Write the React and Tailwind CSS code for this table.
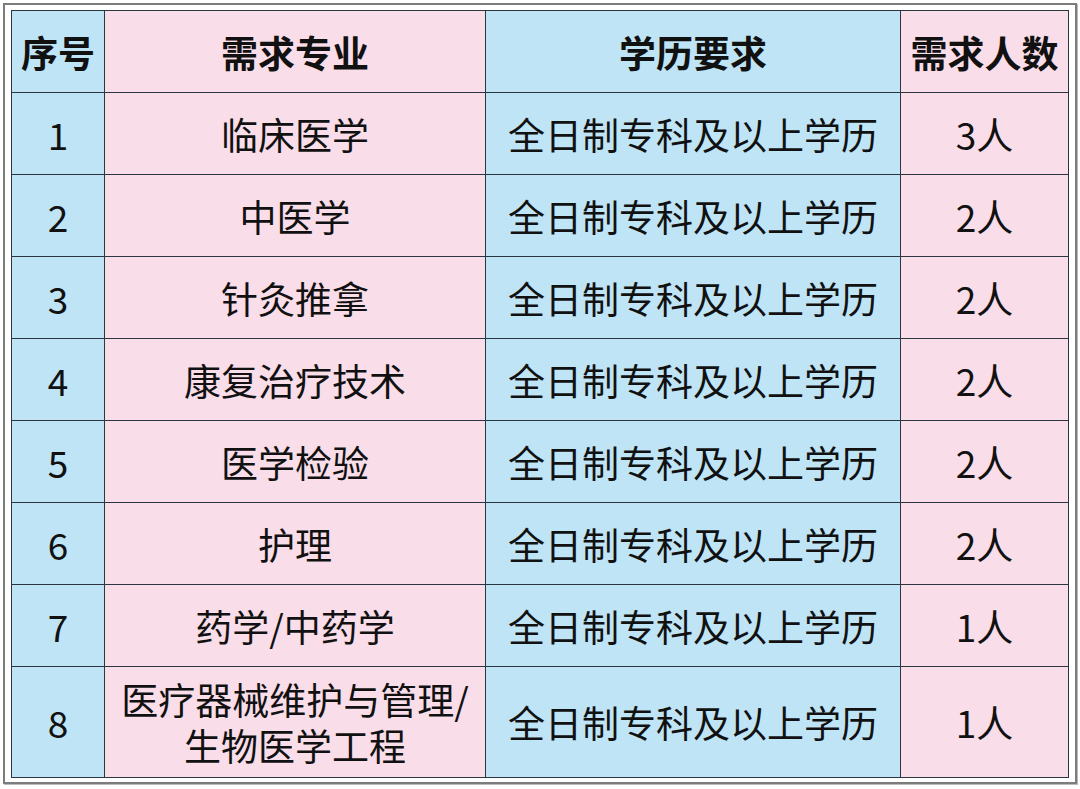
const rows = [
  ['1', '临床医学', '3人'],
  ['2', '中医学', '2人'],
  ['3', '针灸推拿', '2人'],
  ['4', '康复治疗技术', '2人'],
  ['5', '医学检验', '2人'],
  ['6', '护理', '2人'],
  ['7', '药学/中药学', '1人'],
];

const blue = 'bg-[#bee4f6]';
const pink = 'bg-[#f9dde9]';
const cell = 'border border-[#2b3640] text-center align-middle p-0';

export default function App() {
  return (
    <div
      className="w-[1080px] h-[789px] bg-white p-[3px] text-[#111]"
      style={{ fontFamily: "'Noto Sans CJK SC', 'Noto Sans', sans-serif" }}
    >
      <div className="w-[1074px] h-[781px] border-2 border-[#7c7c7c] pl-[6px] pr-[8px] pt-[5px] shadow-[1px_1px_0_#bbb]">
        <table className="border-collapse table-fixed w-[1057px] text-[37px] leading-[46px]">
          <colgroup>
            <col className="w-[93px]" />
            <col className="w-[381px]" />
            <col className="w-[415px]" />
            <col className="w-[168px]" />
          </colgroup>
          <thead>
            <tr className="h-[82px] font-bold">
              <th className={`${cell} ${blue}`}>序号</th>
              <th className={`${cell} ${pink}`}>需求专业</th>
              <th className={`${cell} ${blue}`}>学历要求</th>
              <th className={`${cell} ${pink}`}>需求人数</th>
            </tr>
          </thead>
          <tbody>
            {rows.map(([n, major, count]) => (
              <tr key={n} className="h-[82px]">
                <td className={`${cell} ${blue}`}>{n}</td>
                <td className={`${cell} ${pink}`}>{major}</td>
                <td className={`${cell} ${blue}`}>全日制专科及以上学历</td>
                <td className={`${cell} ${pink}`}>{count}</td>
              </tr>
            ))}
            <tr className="h-[111px]">
              <td className={`${cell} ${blue}`}>8</td>
              <td className={`${cell} ${pink}`}>
                <div>医疗器械维护与管理/</div>
                <div>生物医学工程</div>
              </td>
              <td className={`${cell} ${blue}`}>全日制专科及以上学历</td>
              <td className={`${cell} ${pink}`}>1人</td>
            </tr>
          </tbody>
        </table>
      </div>
    </div>
  );
}
